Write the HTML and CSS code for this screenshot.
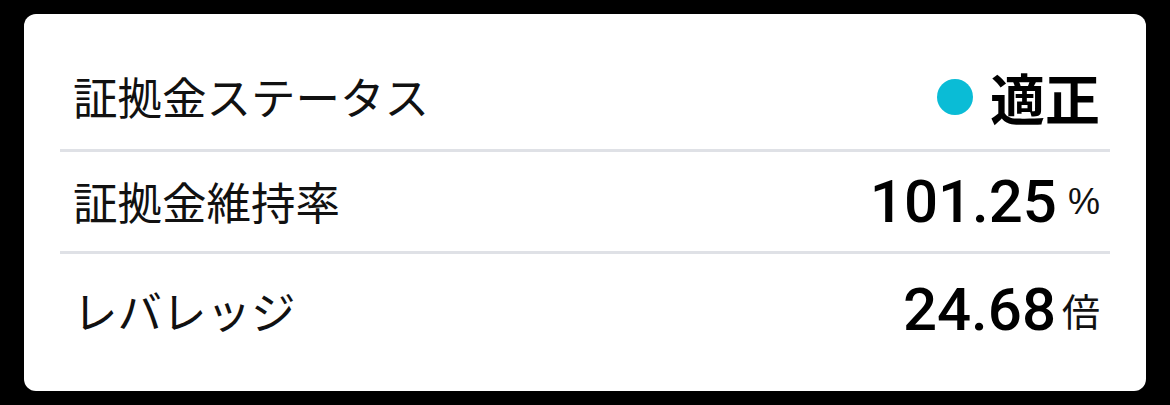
FILE: index.html
```html
<!DOCTYPE html>
<html lang="ja">

<head>
    <meta charset="UTF-8">
    <meta name="viewport" content="width=device-width, initial-scale=1.0">
    <title>証拠金ステータス</title>
    <link rel="stylesheet" href="styles.css">
</head>

<body>
    <div class="card">
        <div class="row row-status">
            <span class="label">証拠金ステータス</span>
            <span class="status">
                <span class="status-dot"></span>
                <span class="status-text">適正</span>
            </span>
        </div>
        <div class="row">
            <span class="label">証拠金維持率</span>
            <span class="value">
                <span class="number">101.25</span>
                <span class="unit unit-percent">%</span>
            </span>
        </div>
        <div class="row row-last">
            <span class="label">レバレッジ</span>
            <span class="value">
                <span class="number">24.68</span>
                <span class="unit">倍</span>
            </span>
        </div>
    </div>
</body>

</html>
```

FILE: styles.css
```css
body {
    margin: 0;
    padding: 14px 24px;
    background-color: #000;
    font-family: 'Noto Sans CJK JP', 'Liberation Sans', sans-serif;
    color: #111;
}

.card {
    background-color: white;
    border-radius: 12px;
    padding: 30px 36px 25px;
}

.row {
    display: flex;
    justify-content: space-between;
    align-items: center;
    height: 99px;
    padding: 0 10px 0 13px;
    border-bottom: 3px solid #dfe1e6;
}

.row-status {
    height: 105px;
}

.row-last {
    height: 112px;
    border-bottom: none;
}

.label {
    font-size: 44.5px;
    line-height: 1;
}

.status {
    display: flex;
    align-items: center;
}

.status-dot {
    width: 36px;
    height: 36px;
    border-radius: 50%;
    background-color: #0abcd6;
    margin-right: 17px;
}

.status-text {
    font-size: 55px;
    font-weight: bold;
    line-height: 1;
    color: #000;
}

.value {
    display: flex;
    align-items: center;
}

.number {
    font-family: Roboto, 'Liberation Sans', sans-serif;
    font-size: 60px;
    font-weight: 500;
    line-height: 1;
    color: #000;
}

.unit {
    font-size: 38px;
    line-height: 1;
    margin-left: 6px;
}

.unit-percent {
    font-family: 'Liberation Sans', sans-serif;
    font-size: 36px;
    margin-left: 11px;
}
```
